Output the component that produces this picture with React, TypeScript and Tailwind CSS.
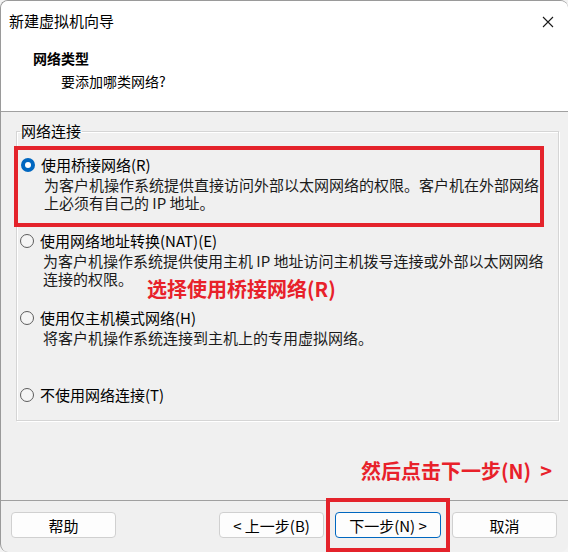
import React from 'react';

const font = { fontFamily: '"Noto Sans CJK SC", "Noto Sans", sans-serif' };

const Radio: React.FC<{ checked?: boolean }> = ({ checked }) =>
  checked ? (
    <span className="w-[14px] h-[14px] rounded-full bg-[#0067c0] flex items-center justify-center shrink-0">
      <span className="w-[6px] h-[6px] rounded-full bg-white" />
    </span>
  ) : (
    <span className="w-[14px] h-[14px] rounded-full border border-[#5d5d5d] bg-[#f5f5f5] shrink-0" />
  );

const Option: React.FC<{ label: string; checked?: boolean; lines?: string[] }> = ({ label, checked, lines }) => (
  <div>
    <div className="flex items-center gap-[6px] pl-[3px] h-[18px] leading-[18px] text-[15px] text-black">
      <Radio checked={checked} />
      <span>{label}</span>
    </div>
    {lines && (
      <div className="pl-[26px] leading-[18px] text-[15px] text-[#1b1b1b] mt-[2px]">
        {lines.map((l) => (
          <div key={l} className="whitespace-nowrap">{l}</div>
        ))}
      </div>
    )}
  </div>
);

const Btn: React.FC<{ children: React.ReactNode; primary?: boolean }> = ({ children, primary }) => (
  <button
    className={
      primary
        ? 'w-[106px] h-[26px] rounded-[4px] border border-[#0067c0] bg-[#fdfdfd] text-[15px] leading-none text-black'
        : 'w-[105px] h-[26px] rounded-[4px] border border-[#d0d0d0] bg-[#fdfdfd] text-[15px] leading-none text-black'
    }
  >
    {children}
  </button>
);

export default function App() {
  return (
    <div className="w-[568px] h-[552px] overflow-hidden bg-[#f3f3f3] relative" style={font}>
      <div className="h-[552px] rounded-[8px] border-l border-t border-[#9a9a9a] bg-[#f0f0f0] flex flex-col overflow-hidden">
        {/* title bar */}
        <div className="h-[41px] bg-white flex items-center justify-between pl-[8px] pr-[14px]">
          <span className="text-[15px] leading-[18px] text-black">新建虚拟机向导</span>
          <svg width="12" height="12" viewBox="0 0 12 12" className="mt-[1px]">
            <path d="M1 1 L11 11 M11 1 L1 11" stroke="#1a1a1a" strokeWidth="1.1" />
          </svg>
        </div>

        {/* header */}
        <div className="h-[71px] bg-white border-b border-[#a0a0a0] pl-[32px] pt-[7px]">
          <div className="text-[14px] leading-[18px] font-bold text-black">网络类型</div>
          <div className="text-[14px] leading-[18px] text-black pl-[28px] mt-[5px]">要添加哪类网络?</div>
        </div>

        {/* body */}
        <div className="h-[391px]">
          <fieldset className="ml-[15px] mr-[9px] mt-[10px] h-[299px] border border-[#d5d5d5] shadow-[inset_1px_1px_0_#ffffff,1px_1px_0_#ffffff]">
            <legend className="ml-[3px] px-[1px] text-[15px] leading-[18px] text-black">网络连接</legend>

            <div className="ml-[-3px] w-[530px] h-[81px] mt-[6px] border-4 border-[#e4232b] pt-[6px]">
              <Option
                checked
                label="使用桥接网络(R)"
                lines={['为客户机操作系统提供直接访问外部以太网网络的权限。客户机在外部网络', '上必须有自己的 IP 地址。']}
              />
            </div>

            <div className="mt-[5px]">
              <Option
                label="使用网络地址转换(NAT)(E)"
                lines={['为客户机操作系统提供使用主机 IP 地址访问主机拨号连接或外部以太网网络', '连接的权限。']}
              />
            </div>

            <div className="mt-[21px]">
              <Option label="使用仅主机模式网络(H)" lines={['将客户机操作系统连接到主机上的专用虚拟网络。']} />
            </div>

            <div className="mt-[39px]">
              <Option label="不使用网络连接(T)" />
            </div>
          </fieldset>
        </div>

        {/* footer */}
        <div className="flex-1 border-t border-[#a0a0a0] pt-[11px] pl-[10px] pr-[11px] flex items-start">
          <Btn>帮助</Btn>
          <div className="ml-auto flex items-start gap-[11px]">
            <Btn>&lt; 上一步(B)</Btn>
            <div className="-mx-[9px] -mt-[14px] border-4 border-[#e4232b] pt-[10px] pb-[10px] px-[5px]">
              <Btn primary>下一步(N) &gt;</Btn>
            </div>
            <Btn>取消</Btn>
          </div>
        </div>
      </div>

      {/* annotations */}
      <div className="absolute left-[147px] top-[277px] text-[20px] leading-[24px] font-bold text-[#e8212a]">
        选择使用桥接网络(R)
      </div>
      <div className="absolute left-[361px] top-[459px] text-[20px] leading-[24px] font-bold text-[#e8212a] whitespace-pre">
        然后点击下一步(N)  &gt;
      </div>
    </div>
  );
}
